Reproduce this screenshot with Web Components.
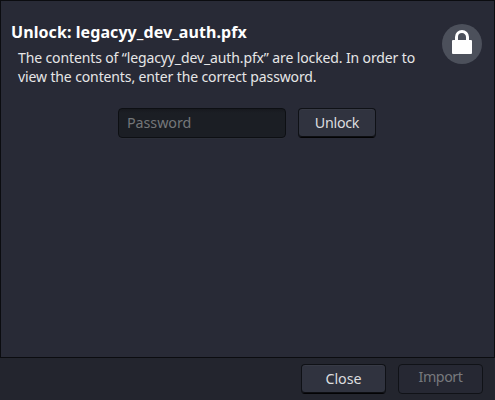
<!DOCTYPE html>
<html lang="en"><head><meta charset="utf-8"><title>Unlock</title>
<style>
html,body{margin:0;height:100%;background:#23252e}
body{font-family:"Noto Sans",sans-serif;color:#e6e6e6;overflow:hidden}
</style></head><body>
<unlock-dialog></unlock-dialog>
<script>
const define=(name,html)=>customElements.define(name,class extends HTMLElement{
  connectedCallback(){
    if(this.shadowRoot)return;
    const t=document.createElement('template');t.innerHTML=html;
    this.attachShadow({mode:'open'}).append(t.content.cloneNode(true));
  }
});
define('lock-badge',`<style>:host{display:block;width:40px;height:40px}svg{display:block}</style>
<svg width="40" height="40" viewBox="0 0 40 40"><circle cx="20" cy="20" r="20" fill="#4c505b"/>
<path d="M14.5 17V13a5.5 5.5 0 0 1 11 0V17" fill="none" stroke="#fff" stroke-width="3"/>
<rect x="10" y="16" width="20" height="14" rx="1" fill="#fff"/></svg>`);
define('push-button',`<style>
:host{display:flex;box-sizing:border-box;height:30px;border:1px solid #0f1116;border-bottom-color:#030304;border-radius:4px;background:#30333f;color:#dcdddf;align-items:center;justify-content:center;box-shadow:inset 0 1px #373a45,inset 0 -1px #0d0e12}
:host([disabled]){background:#262833;border-color:#101217;color:#77797d;box-shadow:none}
span{font-size:14.3px;line-height:20px;letter-spacing:var(--track,-.3px);transform:translateY(var(--dy,0))}
</style><span><slot></slot></span>`);
define('password-field',`<style>
:host{display:flex;box-sizing:border-box;width:168px;height:30px;border:1px solid #0d0f13;border-radius:4px;background:linear-gradient(#17191e,#1b1e24 4px);align-items:center;padding-left:8px;color:#747679;box-shadow:0 1px #2b2e38}
span{font-size:14.3px;line-height:20px;letter-spacing:-.05px}
</style><span><slot></slot></span>`);
define('lock-header',`<style>
:host{display:flex;justify-content:space-between;padding:20px 12px 0 10px}
h1{margin:0;font-size:16px;line-height:22px;font-weight:700;color:#fff;white-space:nowrap;letter-spacing:.08px}
p{margin:5px 0 0 7px;font-size:14px;line-height:19px;white-space:nowrap;letter-spacing:-.12px}
lock-badge{margin-top:3px}
</style><div><h1><slot name="title"></slot></h1><p><slot></slot></p></div><lock-badge></lock-badge>`);
define('unlock-dialog',`<style>
:host{display:flex;flex-direction:column;height:400px;width:495px}
main{box-sizing:border-box;height:358px;border:1px solid #0b0c10;background:#282a36}
.row{display:flex;gap:12px;padding:22px 0 0 117px}
.row push-button{width:78px}
footer{flex:1;display:flex;gap:12px;justify-content:flex-end;align-items:flex-start;padding:6px 12px 0 0;background:#23252e}
footer push-button{width:85px}
</style>
<main><lock-header><span slot="title">Unlock: legacyy_dev_auth.pfx</span>The contents of “legacyy_dev_auth.pfx” are locked. In order to<br>view the contents, enter the correct password.</lock-header>
<div class="row"><password-field>Password</password-field><push-button>Unlock</push-button></div></main>
<footer><push-button style="--track:-.1px">Close</push-button><push-button disabled style="--dy:-2px;--track:-.45px">Import</push-button></footer>`);
</script></body></html>
